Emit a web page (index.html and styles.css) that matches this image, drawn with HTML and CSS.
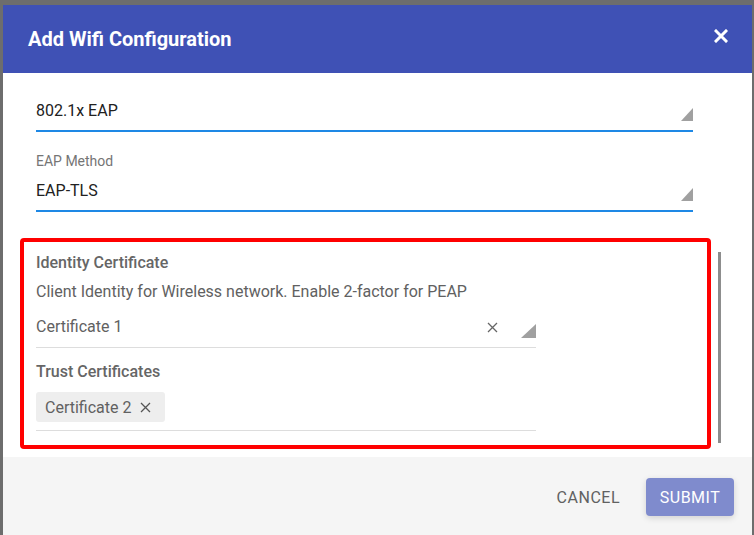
FILE: index.html
```html
<!DOCTYPE html>
<html>
<head>
    <title>Add Wifi Configuration</title>
    <link rel="stylesheet" href="styles.css">
</head>
<body>
    <div class="dialog">
        <div class="dialog-header">
            <h1>Add Wifi Configuration</h1>
            <svg class="close-icon" width="14" height="14" viewBox="0 0 14 14">
                <path d="M2 2 L12 12 M12 2 L2 12" stroke="#fff" stroke-width="3" stroke-linecap="square"/>
            </svg>
        </div>
        <div class="dialog-body">
            <div class="select-field wide">
                <span class="select-value">802.1x EAP</span>
                <svg class="arrow" width="12" height="13" viewBox="0 0 12 13"><polygon points="12,0 12,13 0,13" fill="#a0a0a0"/></svg>
            </div>
            <div class="field-label">EAP Method</div>
            <div class="select-field wide">
                <span class="select-value">EAP-TLS</span>
                <svg class="arrow" width="12" height="13" viewBox="0 0 12 13"><polygon points="12,0 12,13 0,13" fill="#a0a0a0"/></svg>
            </div>
            <div class="highlight-box">
                <div class="section-title">Identity Certificate</div>
                <div class="section-desc">Client Identity for Wireless network. Enable 2-factor for PEAP</div>
                <div class="cert-field">
                    <span class="cert-value">Certificate 1</span>
                    <svg class="clear-icon" width="11" height="11" viewBox="0 0 11 11">
                        <path d="M1 1 L10 10 M10 1 L1 10" stroke="#666" stroke-width="1.3"/>
                    </svg>
                    <svg class="arrow" width="15" height="14" viewBox="0 0 15 14"><polygon points="15,0 15,14 0,14" fill="#a0a0a0"/></svg>
                </div>
                <div class="section-title trust">Trust Certificates</div>
                <div class="chip-field">
                    <span class="chip">Certificate 2
                        <svg width="11" height="11" viewBox="0 0 11 11">
                            <path d="M1 1 L10 10 M10 1 L1 10" stroke="#555" stroke-width="1.3"/>
                        </svg>
                    </span>
                </div>
            </div>
            <div class="scroll-thumb"></div>
        </div>
        <div class="dialog-footer">
            <button class="btn-cancel">CANCEL</button>
            <button class="btn-submit">SUBMIT</button>
        </div>
    </div>
</body>
</html>
```

FILE: styles.css
```css
body {
    margin: 0;
    background-color: #6d6d6d;
    font-family: Roboto, "Liberation Sans", sans-serif;
    overflow: hidden;
}
.dialog {
    margin: 5px 2px 0 3px;
    height: 560px;
    background-color: white;
    display: flex;
    flex-direction: column;
}
.dialog-header {
    height: 68px;
    background-color: #3f51b5;
    display: flex;
    align-items: center;
    justify-content: space-between;
    padding: 0 24px 0 25px;
    box-sizing: border-box;
}
.dialog-header h1 {
    margin: 0;
    color: white;
    font-size: 20px;
    font-weight: bold;
}
.close-icon {
    margin-bottom: 7px;
}
.dialog-body {
    position: relative;
    padding: 28px 0 8px 17px;
    display: flex;
    flex-direction: column;
    align-items: flex-start;
}
.select-field {
    display: flex;
    align-items: flex-end;
    justify-content: space-between;
    margin-left: 16px;
    padding-bottom: 9px;
    border-bottom: 2px solid #1e88e5;
    box-sizing: border-box;
}
.select-field.wide {
    width: 657px;
}
.select-value {
    font-size: 16px;
    line-height: 19px;
    color: #212121;
    padding-bottom: 1px;
}
.field-label {
    margin: 21px 0 0 16px;
    font-size: 14px;
    line-height: 17px;
    color: #757575;
}
.field-label + .select-field {
    margin-top: 11px;
}
.highlight-box {
    margin-top: 26px;
    width: 691px;
    height: 211px;
    box-sizing: border-box;
    border: 4px solid #ff0000;
    border-radius: 4px;
    padding: 11px 12px 0 12px;
}
.section-title {
    font-size: 16px;
    font-weight: 500;
    line-height: 20px;
    color: #666666;
}
.section-title.trust {
    margin-top: 14px;
}
.section-desc {
    margin-top: 9px;
    font-size: 16px;
    line-height: 20px;
    color: #616161;
}
.cert-field {
    margin-top: 15px;
    width: 500px;
    display: flex;
    align-items: center;
    padding-bottom: 10px;
    border-bottom: 1px solid #dddddd;
}
.cert-value {
    flex: 1;
    font-size: 16px;
    line-height: 20px;
    color: #616161;
}
.clear-icon {
    margin-right: 23px;
}
.cert-field .arrow {
    align-self: flex-end;
    margin-bottom: -1px;
}
.chip-field {
    margin-top: 10px;
    width: 500px;
    padding-bottom: 8px;
    border-bottom: 1px solid #dddddd;
}
.chip {
    display: inline-flex;
    align-items: center;
    gap: 9px;
    height: 30px;
    padding: 0 14px 0 9px;
    background-color: #eeeeee;
    border-radius: 3px;
    font-size: 16px;
    color: #616161;
}
.scroll-thumb {
    position: absolute;
    left: 715px;
    top: 179px;
    width: 3px;
    height: 191px;
    background-color: #8d8d8d;
}
.dialog-footer {
    flex: 1;
    background-color: #f5f5f5;
    display: flex;
    justify-content: flex-end;
    align-items: flex-start;
    padding: 21px 18px 0 0;
    gap: 26px;
}
.dialog-footer button {
    font-family: Roboto, "Liberation Sans", sans-serif;
    font-size: 16px;
    letter-spacing: 0.5px;
    border: none;
    height: 38px;
    border-radius: 4px;
    cursor: pointer;
}
.btn-cancel {
    background: none;
    color: #616161;
    padding: 0;
    font-size: 16.5px;
}
.btn-submit {
    width: 88px;
    background-color: #7f8bcd;
    color: white;
    box-shadow: 0 2px 6px rgba(0,0,0,0.15);
}
```
